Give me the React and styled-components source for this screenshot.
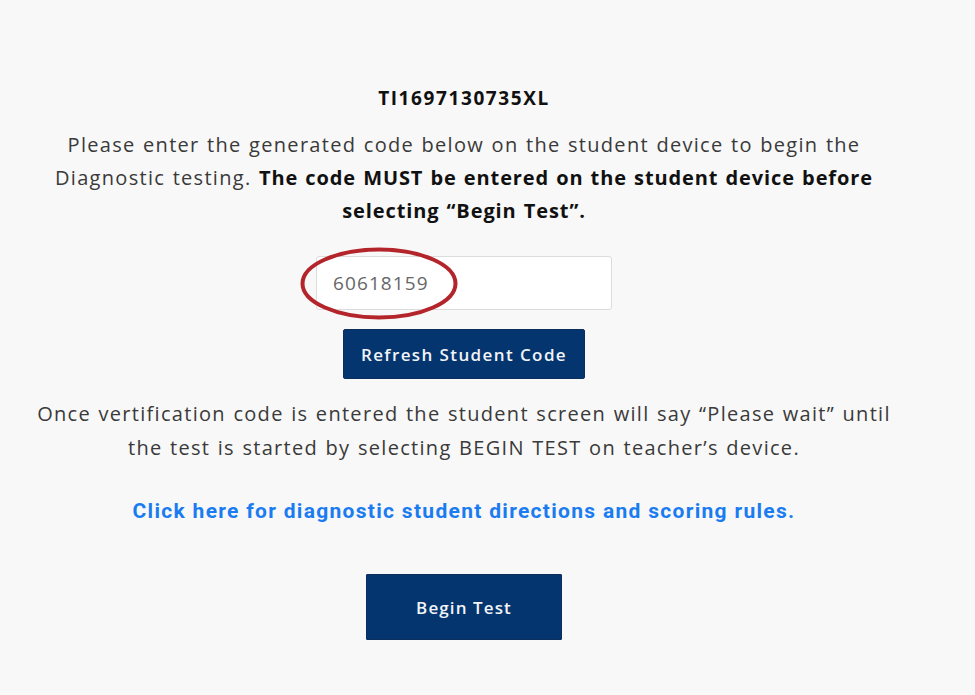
import React from "react";
import styled, { createGlobalStyle } from "styled-components";

const Global = createGlobalStyle`
  html, body { margin: 0; padding: 0; background: #f8f8f8; }
  body { font-family: "Open Sans", "Noto Sans", sans-serif; color: #333; }
`;

const Page = styled.div`
  width: 975px;
  height: 695px;
  background: #f8f8f8;
  display: flex;
  justify-content: flex-start;
`;

const Column = styled.main`
  width: 928px;
  display: flex;
  flex-direction: column;
  align-items: center;
  padding-top: 85px;
`;

const Title = styled.h2`
  margin: 0;
  font-size: 19px;
  line-height: 26px;
  font-weight: 700;
  color: #111;
  letter-spacing: 1.6px;
`;

const Paragraph = styled.p`
  margin: ${(p) => p.$margin || "0"};
  font-size: 20px;
  line-height: ${(p) => p.$lh || 33}px;
  text-align: center;
  color: #3a3a3a;
  letter-spacing: 1.3px;
  word-spacing: 1px;
  white-space: nowrap;
  b { color: #111; font-weight: 700; letter-spacing: 0.9px; }
`;

const CodeWrap = styled.div`
  position: relative;
  margin-top: 29px;
`;

const CodeInput = styled.input`
  box-sizing: border-box;
  width: 296px;
  height: 54px;
  border: 1px solid #dcdcdc;
  border-radius: 3px;
  background: #fff;
  padding: 0 16px;
  font-family: "Open Sans", sans-serif;
  font-size: 19px;
  color: #666;
  letter-spacing: 1.1px;
  outline: none;
`;

const Ellipse = styled.svg`
  position: absolute;
  left: -16px;
  top: -9px;
  pointer-events: none;
`;

const NavyButton = styled.button`
  box-sizing: border-box;
  width: ${(p) => p.$w}px;
  height: ${(p) => p.$h}px;
  margin-top: ${(p) => p.$mt}px;
  background: #04356f;
  border: 1px solid #0a2f5e;
  border-radius: ${(p) => p.$r || 2}px;
  color: #f2f4f8;
  font-family: "Open Sans", sans-serif;
  font-size: 17px;
  font-weight: 600;
  letter-spacing: ${(p) => p.$ls || 1.1}px;
  cursor: pointer;
`;

const Link = styled.a`
  margin-top: 31px;
  font-family: "Roboto", "Liberation Sans", sans-serif;
  font-size: 21px;
  line-height: 30px;
  font-weight: 700;
  color: #1a7cf0;
  text-decoration: none;
  letter-spacing: 1.3px;
`;

export default function App() {
  return (
    <>
      <Global />
      <Page>
        <Column>
          <Title>TI1697130735XL</Title>
          <Paragraph $margin="17px 0 0">
            Please enter the generated code below on the student device to begin the
            <br />
            Diagnostic testing. <b>The code MUST be entered on the student device before</b>
            <br />
            <b>selecting “Begin Test”.</b>
          </Paragraph>
          <CodeWrap>
            <CodeInput readOnly value="60618159" />
            <Ellipse width="160" height="74" viewBox="0 0 160 74">
              <ellipse cx="79" cy="36.5" rx="76.5" ry="34" fill="none" stroke="#b3252a" strokeWidth="4" />
            </Ellipse>
          </CodeWrap>
          <NavyButton $w={242} $h={50} $mt={19} $ls={1.4}>Refresh Student Code</NavyButton>
          <Paragraph $margin="18px 0 0" $lh={34}>
            Once vertification code is entered the student screen will say “Please wait” until
            <br />
            the test is started by selecting BEGIN TEST on teacher’s device.
          </Paragraph>
          <Link href="#">Click here for diagnostic student directions and scoring rules.</Link>
          <NavyButton $w={196} $h={66} $mt={48} $r={1}>Begin Test</NavyButton>
        </Column>
      </Page>
    </>
  );
}
